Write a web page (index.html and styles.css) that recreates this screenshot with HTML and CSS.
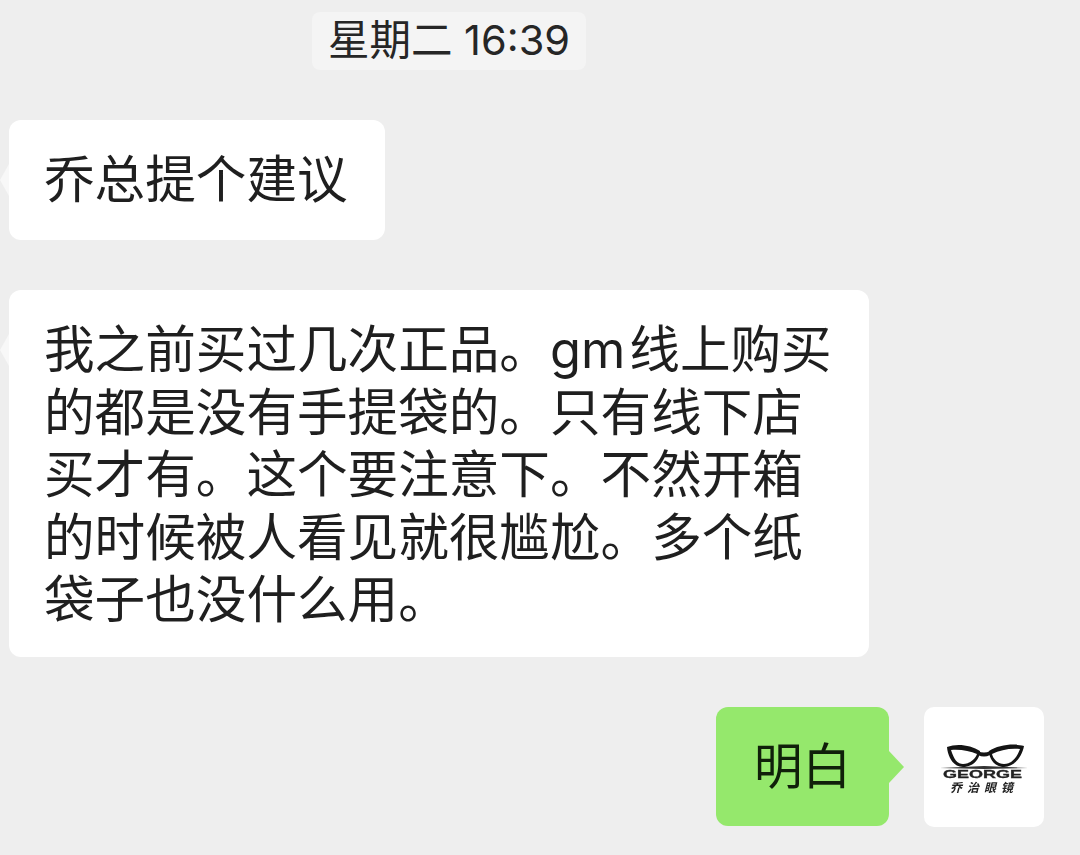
FILE: index.html
```html
<!DOCTYPE html>
<html lang="zh-CN">
<head>
    <meta charset="UTF-8">
    <meta name="viewport" content="width=device-width, initial-scale=1.0">
    <title>聊天记录</title>
    <link rel="stylesheet" href="styles.css">
</head>
<body>
    <div class="chat">
        <div class="time-row">
            <span class="time">星期二 16:39</span>
        </div>

        <div class="msg msg-first">
            <div class="bubble bubble-in">乔总提个建议</div>
        </div>

        <div class="msg msg-second">
            <div class="bubble bubble-in bubble-long">我之前买过几次正品。<span class="latin">gm</span>线上购买<br>的都是没有手提袋的。只有线下店<br>买才有。这个要注意下。不然开箱<br>的时候被人看见就很尴尬。多个纸<br>袋子也没什么用。</div>
        </div>

        <div class="msg msg-mine">
            <div class="bubble bubble-out">明白</div>
            <div class="avatar">
                <svg class="logo" viewBox="0 0 120 120" width="120" height="120">
                    <!-- glasses -->
                    <path class="lens" d="M23 40 C33 36 47 38 56 44 C56 52 49 60 39 60 C30 60 24 51 23 40 Z M27 43 C30 52 33 57 39 57 C46 57 52 51 53 47 C46 44 36 42 27 43 Z"/>
                    <path class="lens" d="M100 39 C90 36 74 38 65 44 C65 52 71 60 80 60 C90 60 98 50 100 39 Z M96 42 C86 41 76 43 68 47 C69 52 74 57 80 57 C88 57 93 50 96 42 Z"/>
                    <path class="lens" d="M54 44 C58 46 62 46 66 44 L66 48 C62 50 58 50 54 48 Z"/>
                    <path class="brow" d="M16 61 L60 59 L104 61 L60 62 Z"/>
                    <text class="logo-en" x="19" y="71" textLength="79" lengthAdjust="spacingAndGlyphs">GEORGE</text>
                    <text class="logo-cn" x="26" y="85" textLength="63">乔治眼镜</text>
                </svg>
            </div>
        </div>
    </div>
</body>
</html>
```

FILE: styles.css
```css
html, body { margin: 0; padding: 0; }
body {
    width: 1080px;
    height: 855px;
    overflow: hidden;
    background: #eeeeee;
    font-family: "Inter", "Noto Sans CJK SC", sans-serif;
    color: #1f1f1f;
}
.chat {
    display: flex;
    flex-direction: column;
    padding-top: 12px;
}
.time-row {
    display: flex;
    justify-content: flex-start;
    padding-left: 312px;
}
.time {
    display: block;
    width: 274px;
    height: 58px;
    box-sizing: border-box;
    text-align: center;
    line-height: 57px;
    font-size: 41.5px;
    background: #f4f4f4;
    border-radius: 8px;
    color: #262626;
}
.msg { display: flex; }
.msg-first { margin-top: 50px; padding-left: 9px; }
.msg-second { margin-top: 50px; padding-left: 9px; }
.msg-mine {
    margin-top: 50px;
    justify-content: flex-end;
    padding-right: 36px;
    gap: 35px;
}
.bubble {
    position: relative;
    box-sizing: border-box;
    border-radius: 12px;
    font-size: 50.6px;
    line-height: 62.5px;
}
.bubble::before {
    content: "";
    position: absolute;
    top: 50%;
    width: 0;
    height: 0;
    margin-top: -16px;
    border-top: 16px solid transparent;
    border-bottom: 16px solid transparent;
}
.bubble-in {
    background: #fff;
    width: 376px;
    height: 120px;
    padding: 29px 0 0 35px;
    white-space: nowrap;
}
.bubble-in::before {
    left: -9px;
    border-right: 9px solid #f8f8f8;
}
.bubble-long {
    width: 860px;
    height: 367px;
}
.bubble-long::before { top: 60px; }
.latin { margin-right: 4px; }
.bubble-out {
    width: 173px;
    height: 119px;
    padding: 29px 0 0 38px;
    background: #95e86c;
    color: #10200a;
    font-size: 48.5px;
}
.bubble-out::before {
    right: -15px;
    border-left: 15px solid #95e86c;
}
.avatar {
    width: 120px;
    height: 120px;
    background: #fff;
    border-radius: 10px;
    overflow: hidden;
}
.logo { display: block; filter: blur(0.3px); }
.lens { fill: #141414; fill-rule: evenodd; }
.brow { fill: #333; }
.logo-en {
    font-family: "Liberation Sans", sans-serif;
    font-size: 11px;
    font-weight: bold;
    fill: #222;
    stroke: #222;
    stroke-width: 0.3px;
}
.logo-cn {
    font-family: "Noto Sans CJK SC", sans-serif;
    font-size: 12px;
    font-weight: bold;
    font-style: italic;
    fill: #222;
}
```
